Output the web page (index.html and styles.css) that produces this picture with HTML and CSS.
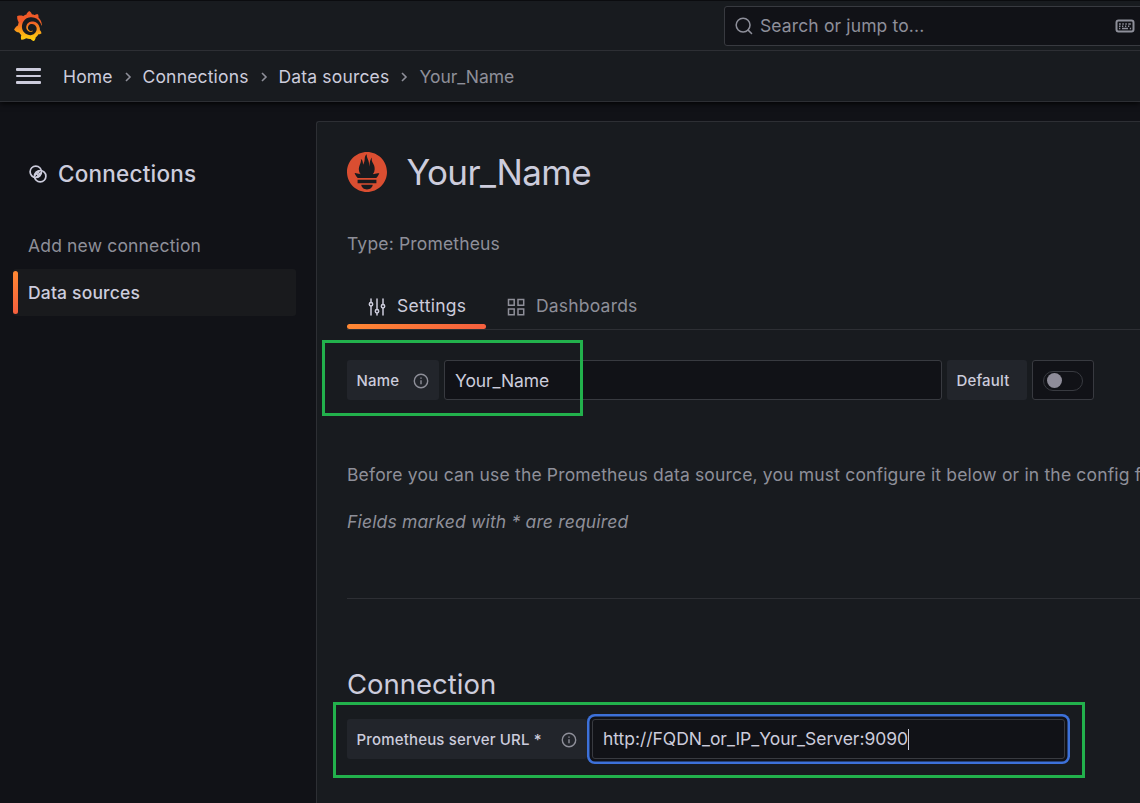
FILE: index.html
```html
<!DOCTYPE html>
<html lang="en">
<head>
<meta charset="utf-8">
<title>Your_Name - Data sources - Connections</title>
<link rel="stylesheet" href="styles.css">
</head>
<body>
<header class="topbar">
  <svg class="logo" viewBox="0 0 24 24"><defs><linearGradient id="sun" x1="0" y1="1" x2="0" y2="0"><stop offset="0" stop-color="#fcd00c"/><stop offset=".2" stop-color="#fcb813"/><stop offset=".65" stop-color="#f05a28"/><stop offset="1" stop-color="#f05a28"/></linearGradient></defs><path fill="url(#sun)" d="M23.02 10.59a8.578 8.578 0 0 0-.862-3.034 8.911 8.911 0 0 0-1.789-2.445c.337-1.342-.413-2.505-.413-2.505-1.292-.08-2.113.4-2.416.62-.052-.02-.102-.044-.154-.064-.22-.089-.446-.172-.677-.247-.231-.073-.47-.14-.711-.197a9.867 9.867 0 0 0-.875-.161C14.557.753 12.94 0 12.94 0c-1.804 1.145-2.147 2.744-2.147 2.744l-.018.093c-.098.029-.2.057-.298.088-.138.042-.275.094-.413.143-.138.055-.275.107-.41.166a8.869 8.869 0 0 0-1.557.87l-.063-.029c-2.497-.955-4.716.195-4.716.195-.203 2.658.996 4.33 1.235 4.636a11.608 11.608 0 0 0-.607 2.635C1.636 12.677.953 15.014.953 15.014c1.926 2.214 4.171 2.351 4.171 2.351.003-.002.006-.002.006-.005.285.509.615.994.986 1.446.156.19.32.371.488.548-.704 2.009.099 3.68.099 3.68 2.144.08 3.553-.937 3.849-1.173a9.784 9.784 0 0 0 3.164.501h.08l.055-.003.107-.002.103-.005.003.002c1.01 1.44 2.788 1.646 2.788 1.646 1.264-1.332 1.337-2.653 1.337-2.94v-.058c0-.02-.003-.039-.003-.06.265-.187.52-.387.758-.6a7.875 7.875 0 0 0 1.415-1.7c1.43.083 2.437-.885 2.437-.885-.236-1.49-1.085-2.216-1.264-2.354l-.018-.013-.016-.013a.217.217 0 0 1-.031-.02c.008-.092.016-.18.02-.27.011-.162.016-.323.016-.48v-.253l-.005-.098-.008-.135a1.891 1.891 0 0 0-.01-.13c-.003-.042-.008-.083-.013-.125l-.016-.124-.018-.122a6.215 6.215 0 0 0-2.032-3.73 6.015 6.015 0 0 0-3.222-1.46 6.292 6.292 0 0 0-.85-.048l-.107.002h-.063l-.044.003-.104.008a4.777 4.777 0 0 0-3.335 1.695c-.332.4-.592.84-.768 1.297a4.594 4.594 0 0 0-.312 1.817l.003.091c.005.055.007.11.013.164a3.615 3.615 0 0 0 .698 1.82 3.53 3.53 0 0 0 1.827 1.282c.33.098.66.14.971.137.039 0 .078 0 .114-.002l.063-.003c.02 0 .041-.003.062-.003.034-.002.065-.007.099-.01.007 0 .018-.003.028-.003l.031-.005.06-.008a1.18 1.18 0 0 0 .112-.02c.036-.008.072-.013.109-.024a2.634 2.634 0 0 0 .914-.415c.028-.02.056-.041.085-.065a.248.248 0 0 0 .039-.35.244.244 0 0 0-.309-.06l-.078.042c-.09.044-.184.083-.283.116a2.476 2.476 0 0 1-.475.096c-.028.003-.054.006-.083.006l-.083.002c-.026 0-.054 0-.08-.002l-.102-.006h-.012l-.024.006c-.016-.003-.031-.003-.044-.006-.031-.002-.06-.007-.091-.01a2.59 2.59 0 0 1-.724-.213 2.557 2.557 0 0 1-.667-.438 2.52 2.52 0 0 1-.805-1.475 2.306 2.306 0 0 1-.029-.444l.006-.122v-.023l.002-.031c.003-.021.003-.04.005-.06a3.163 3.163 0 0 1 1.352-2.29 3.12 3.12 0 0 1 .937-.43 2.946 2.946 0 0 1 .776-.101h.06l.07.002.045.003h.026l.07.005a4.041 4.041 0 0 1 1.635.49 3.94 3.94 0 0 1 1.602 1.662 3.77 3.77 0 0 1 .397 1.414l.005.076.003.075c.002.026.002.05.002.075 0 .024.003.052 0 .07v.065l-.002.073-.008.174a6.195 6.195 0 0 1-.08.639 5.1 5.1 0 0 1-.267.927 5.31 5.31 0 0 1-.624 1.13 5.052 5.052 0 0 1-3.237 2.014 4.82 4.82 0 0 1-.649.066l-.039.003h-.287a6.607 6.607 0 0 1-1.716-.265 6.776 6.776 0 0 1-3.4-2.274 6.75 6.75 0 0 1-.746-1.15 6.616 6.616 0 0 1-.714-2.596l-.005-.083-.002-.02v-.056l-.003-.073v-.096l-.003-.104v-.07l.003-.163c.008-.22.026-.45.054-.678a8.707 8.707 0 0 1 .28-1.355c.128-.444.286-.872.473-1.277a7.04 7.04 0 0 1 1.456-2.1 5.925 5.925 0 0 1 .953-.763c.169-.111.343-.213.524-.306.089-.05.182-.091.273-.135.047-.02.093-.042.138-.062a7.177 7.177 0 0 1 .714-.267l.145-.045c.049-.015.098-.026.148-.041.098-.029.197-.052.296-.076.049-.013.1-.02.15-.033l.15-.032.151-.028.076-.013.075-.01.153-.024c.057-.01.114-.013.171-.023l.169-.021c.036-.003.073-.008.106-.01l.073-.008.036-.003.042-.002c.057-.003.114-.008.171-.01l.086-.006h.023l.037-.003.145-.007a7.999 7.999 0 0 1 1.708.125 7.917 7.917 0 0 1 2.048.68 8.253 8.253 0 0 1 1.672 1.09l.09.077.089.078c.06.052.114.107.171.159.057.052.112.106.166.16.052.055.107.107.159.164a8.671 8.671 0 0 1 1.41 1.978c.012.026.028.052.04.078l.04.078.075.156c.023.051.05.1.07.153l.065.15a8.848 8.848 0 0 1 .45 1.34.19.19 0 0 0 .201.142.186.186 0 0 0 .172-.184c.01-.246.002-.532-.024-.856z"/></svg>
  <div class="search">
    <svg class="icon search-icon" viewBox="0 0 20 20"><circle cx="9" cy="9" r="7.7"/><path d="M14.600 14.600l3.800 3.800"/></svg>
    <span class="search-text">Search or jump to...</span>
    <svg class="keyboard" viewBox="0 0 20 14"><rect x="1.500" y="1.500" width="17" height="11" rx="2"/><path d="M4 5h1.800M7.300 5h1.500M10.300 5h1.500M13.300 5h2.500M4 7.300h1.500M7 7.300h1.300M10 7.300h1.300M13 7.300h1.300M4 9.600h1.300M7 9.600h6M14.800 9.600h1.300"/></svg>
  </div>
</header>
<nav class="crumbs">
  <span class="menu"><i></i><i></i><i></i></span>
  <span class="crumb home">Home</span>
  <svg class="chev" viewBox="0 0 8 10"><path d="M2 1l4 4-4 4"/></svg>
  <span class="crumb conns">Connections</span>
  <svg class="chev" viewBox="0 0 8 10"><path d="M2 1l4 4-4 4"/></svg>
  <span class="crumb sources">Data sources</span>
  <svg class="chev" viewBox="0 0 8 10"><path d="M2 1l4 4-4 4"/></svg>
  <span class="crumb current">Your_Name</span>
</nav>
<div class="page">
  <aside class="sidebar">
    <div class="side-title">
      <svg class="icon link-icon" viewBox="0 0 18 18"><circle cx="6.800" cy="6.800" r="5.700"/><circle cx="11.200" cy="11.200" r="5.700"/><path d="M5.900 10.200l4.300-4.300M7.800 12.100l4.300-4.300M7.500 8.500l2 2M8.800 7l2 2"/></svg>
      <span>Connections</span>
    </div>
    <div class="side-item">Add new connection</div>
    <div class="side-item active">Data sources</div>
  </aside>
  <main class="panel">
    <div class="title-row">
      <svg class="prom" viewBox="0 0 24 24"><path fill="#da4e31" d="M12 0C5.373 0 0 5.372 0 12c0 6.627 5.373 12 12 12s12-5.373 12-12c0-6.628-5.373-12-12-12zm0 22.460c-1.885 0-3.414-1.260-3.414-2.814h6.828c0 1.553-1.528 2.813-3.414 2.813zm5.640-3.745H6.360v-2.046h11.280v2.046zm-.040-3.098H6.391c-.037-.043-.075-.086-.111-.130-1.155-1.401-1.427-2.133-1.690-2.879-.005-.025 1.400.287 2.395.511 0 0 .513.119 1.262.255-.720-.843-1.147-1.915-1.147-3.010 0-2.406 1.845-4.508 1.180-6.207.648.053 1.340 1.367 1.387 3.422.689-.951.977-2.690.977-3.755 0-1.103.727-2.385 1.454-2.429-.648 1.069.168 1.984.894 4.256.272.854.237 2.290.447 3.201.070-1.892.395-4.652 1.595-5.605-.529 1.200.079 2.702.494 3.424.671 1.164 1.078 2.047 1.078 3.716a4.642 4.642 0 0 1-1.110 2.996c.792-.149 1.340-.283 1.340-.283l2.573-.502s-.374 1.538-1.810 3.019z"/></svg>
      <h1>Your_Name</h1>
    </div>
    <div class="type">Type: Prometheus</div>
    <div class="tabs">
      <div class="tab selected">
        <svg class="icon" viewBox="0 0 18 18"><path d="M3 1v3.500M3 8v9M9 1v10.500M9 15.500V17M15 1v5.500M15 10v7"/><circle cx="3" cy="6.300" r="1.700"/><circle cx="9" cy="13.300" r="1.700"/><circle cx="15" cy="8.300" r="1.700"/></svg>
        <span>Settings</span>
      </div>
      <div class="tab">
        <svg class="icon" viewBox="0 0 18 18"><path d="M1.500 1.500h5.700v5.700H1.500zM11 1.500h5.700v5.700H11zM1.500 11h5.700v5.700H1.500zM11 11h5.700v5.700H11z"/></svg>
        <span>Dashboards</span>
      </div>
    </div>
    <div class="form-row">
      <div class="label name-label">Name<svg class="info" viewBox="0 0 16 16"><circle cx="8" cy="8" r="6.700"/><path d="M8 7.300v4M8 4.500v1.300"/></svg></div>
      <div class="input name-input">Your_Name</div>
      <div class="label default-label">Default</div>
      <div class="switch-box"><span class="switch"></span></div>
      <div class="highlight mark-name"></div>
    </div>
    <p class="hint">Before you can use the Prometheus data source, you must configure it below or in the config file.</p>
    <p class="required">Fields marked with * are required</p>
    <hr>
    <h3>Connection</h3>
    <div class="form-row">
      <div class="label url-label">Prometheus server URL *<svg class="info" viewBox="0 0 16 16"><circle cx="8" cy="8" r="6.700"/><path d="M8 7.300v4M8 4.500v1.300"/></svg></div>
      <div class="input url-input">http://FQDN_or_IP_Your_Server:9090<i class="caret"></i></div>
      <div class="highlight mark-url"></div>
    </div>
  </main>
</div>
</body>
</html>
```
FILE: styles.css
```css
* { box-sizing: border-box; }
body {
  margin: 0;
  width: 1140px;
  height: 803px;
  overflow: hidden;
  display: flex;
  flex-direction: column;
  background: #111217;
  color: #ccccdc;
  font: 400 17.5px/28px Inter, "Liberation Sans", sans-serif;
  letter-spacing: 0.17px;
}
svg { display: block; flex: none; fill: none; stroke: none; }
h1, h3, p { margin: 0; font-weight: 400; }

.topbar {
  position: relative;
  z-index: 1;
  overflow: hidden;
  height: 51px;
  flex: none;
  display: flex;
  justify-content: space-between;
  background: #181b1f;
  border-top: 1px solid #0b0c0f;
  border-bottom: 1px solid #2d2f34;
}
.logo { width: 30px; height: 30px; margin: 10px 0 0 13px; }
.search {
  width: 436px;
  height: 40px;
  margin: 5px -20px 0 0;
  padding-left: 10px;
  display: flex;
  align-items: center;
  background: #111217;
  border: 1px solid #383a40;
  border-radius: 3px;
  color: #8e8f9a;
}
.icon { width: 18px; height: 18px; stroke: currentColor; stroke-width: 1.5; stroke-linecap: round; }
.search-icon { width: 18px; height: 18px; stroke-width: 1.7; }
.search-text { margin-left: 7px; width: 355px; letter-spacing: 0.13px; }
.keyboard { width: 20px; height: 14px; stroke: currentColor; stroke-width: 2; }
.keyboard path { stroke-width: 1.5; }

.crumbs {
  height: 51px;
  flex: none;
  display: flex;
  align-items: center;
  padding-left: 16px;
  background: #181b1f;
  border-bottom: 1px solid #2d2f34;
  box-shadow: 0 1px 6px #000;
}
.crumb { padding-top: 2px; }
.menu { display: flex; flex-direction: column; gap: 4px; width: 25px; margin-right: 22px; }
.menu i { height: 2.400px; border-radius: 1px; background: #ccccdc; }
.chev { width: 8px; height: 10px; margin-top: 2px; stroke: #8e8f99; stroke-width: 1.6; }
.home { width: 61px; }
.conns { width: 117px; margin-left: 10.500px; }
.sources { width: 121px; margin-left: 11px; }
.current { margin-left: 12px; color: #8e8f99; letter-spacing: -0.05px; }

.page { flex: 1; min-height: 0; display: flex; }
.sidebar { width: 316px; padding: 57px 20px 0 13px; }
.side-title {
  display: flex;
  align-items: center;
  gap: 11px;
  height: 30px;
  margin-bottom: 33px;
  padding-left: 16px;
  font-size: 22.5px;
  font-weight: 500;
  letter-spacing: 0.22px;
}
.link-icon { stroke-width: 1.7; }
.side-item { height: 47px; padding: 10px 0 0 15px; color: #8e8f99; border-radius: 3px; }
.side-item.active {
  position: relative;
  color: #ccccdc;
  font-weight: 500;
  background: #191a1d;
}
.side-item.active::before {
  content: "";
  position: absolute;
  left: 0;
  top: 2px;
  width: 5px;
  height: 43px;
  border-radius: 3px;
  background: linear-gradient(#ff8833, #f55f3e);
}
.panel {
  flex: 1;
  min-width: 0;
  margin-top: 19px;
  padding: 29px 0 0 30px;
  overflow: hidden;
  white-space: nowrap;
  background: #181b1f;
  border: solid #2d2f34;
  border-width: 1px 0 0 1px;
  border-top-left-radius: 3px;
}
.title-row { display: flex; align-items: center; height: 42px; }
.prom { width: 40px; height: 40px; }
h1 { margin-left: 19.500px; font-size: 35px; line-height: 42px; letter-spacing: -0.62px; }
.type { margin-top: 37px; color: #8e8f99; }
.tabs { display: flex; height: 52px; margin-top: 20px; border-bottom: 1px solid #2d2f34; }
.tab { display: flex; gap: 11px; height: 51px; padding: 14px 20px 0 21px; color: #8e8f99; letter-spacing: 0.2px; }
.tab .icon { margin-top: 6px; }
.tab.selected { position: relative; width: 139px; color: #ccccdc; letter-spacing: 0.3px; }
.tab.selected::after {
  content: "";
  position: absolute;
  left: 0;
  bottom: 0;
  width: 139px;
  height: 5px;
  border-radius: 3px;
  background: linear-gradient(90deg, #ff8833, #f55f3e);
}
.form-row { position: relative; display: flex; height: 40px; }
.tabs + .form-row { margin-top: 30px; }
.label {
  display: flex;
  align-items: center;
  justify-content: space-between;
  padding: 1px 10.500px 0 9.500px;
  background: #22252b;
  border-radius: 3px;
  font-size: 15px;
  font-weight: 500;
}
.name-label { width: 92px; }
.info { width: 16px; height: 16px; stroke: #8e8f99; stroke-width: 1.4; }
.input {
  display: flex;
  align-items: center;
  padding-left: 10px;
  background: #111217;
  border: 1px solid #383a40;
  border-radius: 3px;
}
.name-input { width: 498px; margin: 0 5px; padding-top: 2px; letter-spacing: -0.1px; }
.default-label { width: 80px; }
.switch-box {
  width: 62px;
  margin-left: 5px;
  padding: 10px 0 0 10px;
  background: #111217;
  border: 1px solid #383a40;
  border-radius: 3px;
}
.switch { display: block; width: 40px; height: 20px; padding: 1px 3px; border: 1px solid #383a40; border-radius: 10px; }
.switch::before { content: ""; display: block; width: 15px; height: 15px; border-radius: 50%; background: #8e8c99; }
.highlight { position: absolute; border: 3px solid #22b14c; }
.mark-name { left: -25px; top: -20px; width: 261px; height: 76px; }
.mark-url { left: -14px; top: -17px; width: 752px; height: 76px; }
.hint { margin-top: 61px; color: #8e8f99; }
.required { margin-top: 19px; color: #8e8f99; font-style: italic; }
hr { height: 1px; margin: 62px 0 0; border: 0; background: #2d2f34; }
h3 { height: 34px; margin: 68px 0 18px; font-size: 27.5px; line-height: 34px; letter-spacing: 0; }
.url-label { width: 240px; }
.url-input { width: 472.500px; margin-left: 5px; letter-spacing: -0.03px; box-shadow: 0 0 0 2.500px #111217, 0 0 0 5px #3d71d9; }
.caret { width: 1px; height: 21px; background: #ccccdc; }
```
